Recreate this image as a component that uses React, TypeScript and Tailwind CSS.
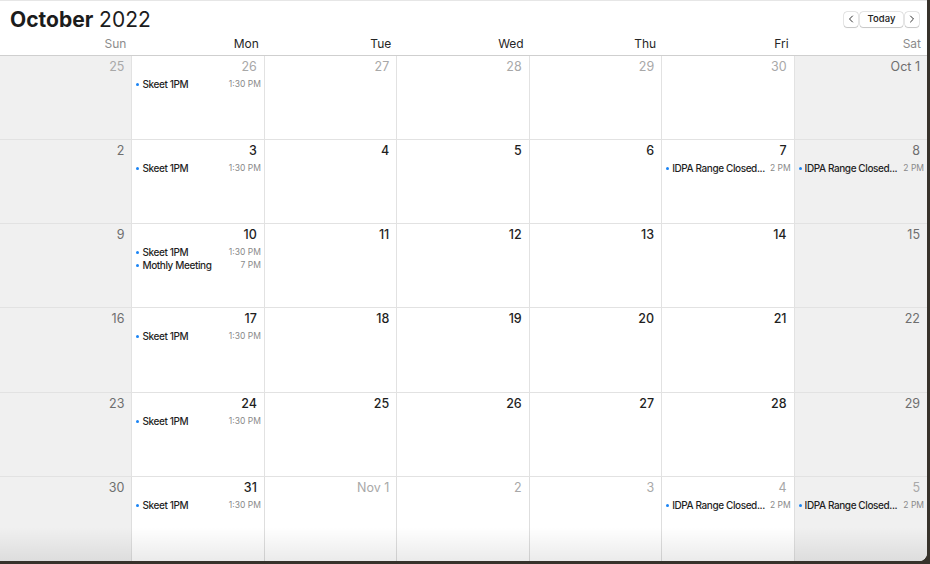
import React from "react";
import { ChevronLeft, ChevronRight } from "lucide-react";

type CalEvent = { title: string; time: string };
type Day = { label: string; inMonth: boolean; events?: CalEvent[] };

const skeet: CalEvent = { title: "Skeet 1PM", time: "1:30 PM" };
const idpa: CalEvent = { title: "IDPA Range Closed...", time: "2 PM" };

const dayNames = ["Sun", "Mon", "Tue", "Wed", "Thu", "Fri", "Sat"];

function buildWeeks(): Day[][] {
    const days: Day[] = [];
    // trailing September days
    for (let d = 25; d <= 30; d++) {
        days.push({ label: String(d), inMonth: false, events: d === 26 ? [skeet] : [] });
    }
    for (let d = 1; d <= 31; d++) {
        const events: CalEvent[] = [];
        if ([3, 10, 17, 24, 31].includes(d)) events.push(skeet);
        if (d === 10) events.push({ title: "Mothly Meeting", time: "7 PM" });
        if (d === 7 || d === 8) events.push(idpa);
        days.push({ label: d === 1 ? "Oct 1" : String(d), inMonth: true, events });
    }
    for (let d = 1; d <= 5; d++) {
        days.push({
            label: d === 1 ? "Nov 1" : String(d),
            inMonth: false,
            events: d === 4 || d === 5 ? [idpa] : [],
        });
    }
    const weeks: Day[][] = [];
    for (let i = 0; i < days.length; i += 7) weeks.push(days.slice(i, i + 7));
    return weeks;
}

function DayCell({ day, col, last }: { day: Day; col: number; last: boolean }) {
    const weekend = col === 0 || col === 6;
    let numColor = "text-[#a8a8a8] font-normal";
    if (day.inMonth) numColor = weekend ? "text-[#6e6e6e] font-normal" : "text-[#1f1f1f] font-medium";

    return (
        <div
            className={`min-w-0 ${weekend ? "bg-[#f0f0f0]" : "bg-white"} ${
                col < 6 ? "border-r border-[#dedede]" : ""
            } ${last ? "" : "border-b border-[#e2e2e2]"}`}
        >
            <div className={`pt-[3px] pr-[7px] text-right text-[12.5px] leading-[16px] ${numColor}`}>
                {day.label}
            </div>
            <div className="mt-[3px] flex flex-col">
                {day.events?.map((ev, i) => (
                    <div key={i} className="flex items-center pl-[4px] pr-[3px] leading-[13px]">
                        <span className="h-[3px] w-[3px] shrink-0 rounded-full bg-[#1a84f5]" />
                        <span className="ml-[3px] min-w-0 flex-1 truncate text-[10px] font-medium tracking-[-0.4px] text-[#1f1f1f]">
                            {ev.title}
                        </span>
                        <span className="ml-[3px] shrink-0 text-[8.5px] text-[#8a8a8a]">{ev.time}</span>
                    </div>
                ))}
            </div>
        </div>
    );
}

export default function App() {
    const weeks = buildWeeks();

    return (
        <div
            className="h-[564px] w-[930px] overflow-hidden bg-[#37322b]"
            style={{ fontFamily: "Inter, 'Liberation Sans', sans-serif" }}
        >
            <div className="relative flex h-[561px] w-[927px] flex-col overflow-hidden rounded-br-[8px] bg-white">
                {/* Header */}
                <div className="flex h-[37px] items-center justify-between border-t border-[#e6e6e6] pl-[10px] pr-[8px]">
                    <h1 className="text-[21px] leading-none text-[#1c1c1c]">
                        <span className="font-bold">October</span> <span className="font-normal">2022</span>
                    </h1>
                    <div className="flex items-center gap-[2px]">
                        <button className="flex h-[15px] w-[14px] items-center justify-center rounded-[3px] bg-white shadow-[0_0_0_0.5px_rgba(0,0,0,0.18),0_0.5px_1px_rgba(0,0,0,0.15)]">
                            <ChevronLeft className="h-[12px] w-[12px] text-[#333]" strokeWidth={2} />
                        </button>
                        <button className="flex h-[15px] w-[43px] items-center justify-center rounded-[3px] bg-white text-[9.5px] font-medium text-[#222] shadow-[0_0_0_0.5px_rgba(0,0,0,0.18),0_0.5px_1px_rgba(0,0,0,0.15)]">
                            Today
                        </button>
                        <button className="flex h-[15px] w-[14px] items-center justify-center rounded-[3px] bg-white shadow-[0_0_0_0.5px_rgba(0,0,0,0.18),0_0.5px_1px_rgba(0,0,0,0.15)]">
                            <ChevronRight className="h-[12px] w-[12px] text-[#333]" strokeWidth={2} />
                        </button>
                    </div>
                </div>

                {/* Day names */}
                <div className="grid h-[19px] grid-cols-7 border-b border-[#cfcfcf]">
                    {dayNames.map((n, i) => (
                        <div
                            key={n}
                            className={`pr-[6px] text-right text-[12px] leading-[14px] ${
                                i === 0 || i === 6 ? "text-[#8c8c8c]" : "text-[#262626]"
                            }`}
                        >
                            {n}
                        </div>
                    ))}
                </div>

                {/* Month grid */}
                <div className="grid flex-1 grid-cols-7 grid-rows-6">
                    {weeks.map((week, wi) =>
                        week.map((day, di) => (
                            <DayCell key={`${wi}-${di}`} day={day} col={di} last={wi === weeks.length - 1} />
                        ))
                    )}
                </div>

                {/* bottom fade */}
                <div className="pointer-events-none absolute bottom-0 left-0 right-0 h-[34px] bg-gradient-to-b from-transparent to-black/[0.08]" />
            </div>
        </div>
    );
}
